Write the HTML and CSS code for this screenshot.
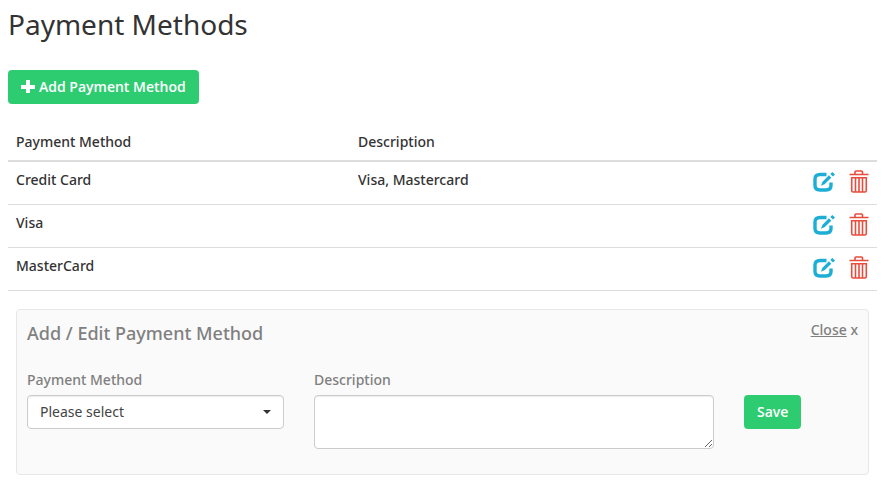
FILE: index.html
```html
<!DOCTYPE html>
<html lang="en">
  <head>
    <meta charset="UTF-8">
    <title>Payment Methods</title>
    <link rel="stylesheet" href="styles.css">
  </head>
  <body>

    <!-- shared icons -->
    <svg class="icon-defs" aria-hidden="true">
      <symbol id="icon-edit" viewBox="0 0 22 20">
        <path d="M13.500 2.500H7Q2 2.500 2 7V13.500Q2 18 7 18H13Q18 18 18 13.500V10.500" fill="none" stroke="currentColor" stroke-width="3.400"/>
        <path d="M15.900 3.300 18.300 5.700 11.500 12.300 8 13.700 9.300 9.900ZM19.300 0 22 2.500 20 4.500 17.300 2Z" fill="currentColor"/>
      </symbol>
      <symbol id="icon-trash" viewBox="0 0 20 24">
        <path d="M.5 4.500H19.500M6 4V2Q6 1 7 1H12.500Q13.500 1 13.500 2V4M2.700 7.700V20.500Q2.700 22 4.200 22H15.800Q17.300 22 17.300 20.500V7.700ZM6.500 8V22M10 8V22M13.500 8V22" fill="none" stroke="currentColor" stroke-width="1.600"/>
      </symbol>
    </svg>

    <main class="page">
      <h1 class="page-title">Payment Methods</h1>

      <button class="btn" type="button">
        <svg class="icon-plus" viewBox="0 0 14 14" aria-hidden="true"><path d="M5 0H9V5H14V9H9V13H5V9H0V5H5Z" fill="currentColor"/></svg>
        Add Payment Method
      </button>

      <table class="methods">
        <thead>
          <tr>
            <th class="col-method">Payment Method</th>
            <th>Description</th>
            <th class="col-actions"></th>
          </tr>
        </thead>
        <tbody>
          <tr>
            <td>Credit Card</td>
            <td>Visa, Mastercard</td>
            <td>
              <div class="actions">
                <button class="action edit" type="button" aria-label="Edit"><svg><use href="#icon-edit"/></svg></button>
                <button class="action remove" type="button" aria-label="Delete"><svg><use href="#icon-trash"/></svg></button>
              </div>
            </td>
          </tr>
          <tr>
            <td>Visa</td>
            <td></td>
            <td>
              <div class="actions">
                <button class="action edit" type="button" aria-label="Edit"><svg><use href="#icon-edit"/></svg></button>
                <button class="action remove" type="button" aria-label="Delete"><svg><use href="#icon-trash"/></svg></button>
              </div>
            </td>
          </tr>
          <tr>
            <td>MasterCard</td>
            <td></td>
            <td>
              <div class="actions">
                <button class="action edit" type="button" aria-label="Edit"><svg><use href="#icon-edit"/></svg></button>
                <button class="action remove" type="button" aria-label="Delete"><svg><use href="#icon-trash"/></svg></button>
              </div>
            </td>
          </tr>
        </tbody>
      </table>

      <form class="panel">
        <div class="panel-header">
          <h2 class="panel-title">Add / Edit Payment Method</h2>
          <span class="close"><a href="#">Close</a> x</span>
        </div>
        <div class="fields">
          <div class="field field-method">
            <label for="method">Payment Method</label>
            <div class="select">
              <select id="method">
                <option>Please select</option>
                <option>Credit Card</option>
                <option>Visa</option>
                <option>MasterCard</option>
              </select>
              <span class="caret"></span>
            </div>
          </div>
          <div class="field field-description">
            <label for="description">Description</label>
            <textarea id="description"></textarea>
          </div>
          <button class="btn save" type="submit">Save</button>
        </div>
      </form>
    </main>

  </body>
</html>
```

FILE: styles.css
```css
* { box-sizing: border-box }

body {
  margin: 0;
  background: #fff;
  color: #333;
  font: 500 14px/20px "Noto Sans", "Open Sans", sans-serif;
}

button, select, textarea { font: inherit }

.icon-defs { display: none }

.page { padding: 8px 15px 5px 8px }

.page-title {
  margin: 0 0 30px;
  font-size: 28px;
  font-weight: 400;
  line-height: 32px;
}

.btn {
  display: inline-flex;
  align-items: center;
  gap: 4px;
  height: 34px;
  padding: 0 13px;
  border: 0;
  border-radius: 4px;
  background: #2ecc71;
  color: #fff;
  font-family: "Open Sans", sans-serif;
  font-weight: 600;
  cursor: pointer;
}

.icon-plus {
  width: 14px;
  height: 14px;
}

.methods {
  width: 100%;
  margin: 20px 0 18px;
  border-collapse: separate;
  border-spacing: 0;
  table-layout: fixed;
}

.methods th {
  height: 38px;
  padding: 8px;
  border-bottom: 2px solid #ddd;
  font-weight: 500;
  text-align: left;
}

.methods td {
  height: 43px;
  padding: 8px;
  border-bottom: 1px solid #ddd;
  vertical-align: top;
}

.col-method { width: 342px }
.col-actions { width: 80px }

.actions {
  display: flex;
  align-items: center;
  justify-content: flex-end;
  gap: 14px;
  height: 24px;
}

.action {
  padding: 0;
  border: 0;
  background: none;
  cursor: pointer;
}

.action svg { display: block }

.edit { color: #1caed4 }
.edit svg {
  width: 22px;
  height: 20px;
}

.remove { color: #e74c3c }
.remove svg {
  width: 20px;
  height: 24px;
}

.panel {
  margin: 0 8px;
  padding: 10px 10px 25px;
  border: 1px solid #e7e7e7;
  border-radius: 4px;
  background: #fafafa;
  color: #808080;
}

.panel-header {
  display: flex;
  justify-content: space-between;
  margin-bottom: 24px;
}

.panel-title {
  margin: 0;
  font-size: 18px;
  font-weight: 500;
  line-height: 26px;
}

.close a {
  color: inherit;
  text-decoration: underline;
}

.fields {
  display: flex;
  align-items: flex-start;
  gap: 30px;
}

.field label {
  display: block;
  margin-bottom: 5px;
}

.field-method { flex: 0 1 257px }
.field-description { flex: 0 1 400px }

.select {
  display: grid;
  align-items: center;
}

.select select {
  grid-area: 1 / 1;
  width: 100%;
  height: 34px;
  padding: 0 12px;
  border: 1px solid #ccc;
  border-radius: 4px;
  background: #fff;
  box-shadow: inset 0 1px 1px rgba(0, 0, 0, .075);
  color: #444;
  font-weight: 400;
  appearance: none;
}

.caret {
  grid-area: 1 / 1;
  justify-self: end;
  margin-right: 13px;
  border: 4px solid transparent;
  border-top-color: #333;
  border-bottom: 0;
  pointer-events: none;
}

textarea {
  display: block;
  width: 100%;
  height: 54px;
  padding: 6px 12px;
  border: 1px solid #ccc;
  border-radius: 4px;
  background: #fff;
  box-shadow: inset 0 1px 1px rgba(0, 0, 0, .075);
  color: #333;
  resize: vertical;
}

.save { margin-top: 25px }
```
